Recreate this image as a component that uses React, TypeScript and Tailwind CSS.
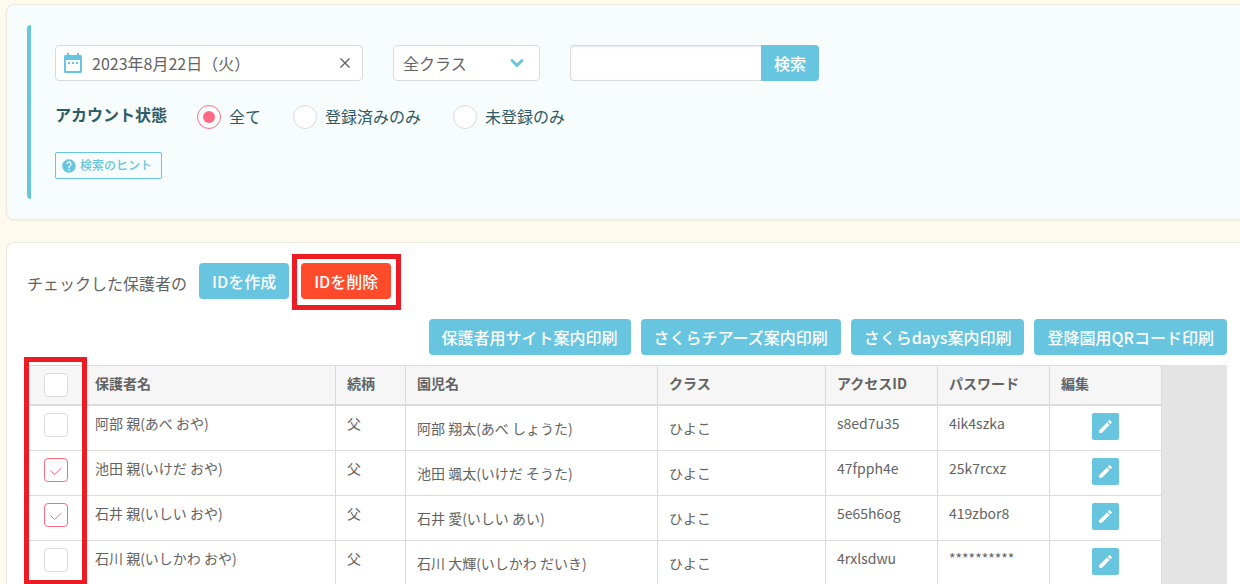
import { useState } from "react";
import { MdEdit, MdHelp } from "react-icons/md";

const statuses = [
  { id: "all", label: "全て" },
  { id: "registered", label: "登録済みのみ" },
  { id: "unregistered", label: "未登録のみ" },
];

const printButtons = [
  "保護者用サイト案内印刷",
  "さくらチアーズ案内印刷",
  "さくらdays案内印刷",
  "登降園用QRコード印刷",
];

const columns = [
  { name: "保護者名", width: "w-[252px]" },
  { name: "続柄", width: "w-[70px]" },
  { name: "園児名", width: "w-[252px]" },
  { name: "クラス", width: "w-[168px]" },
  { name: "アクセスID", width: "w-[112px]" },
  { name: "パスワード", width: "w-[112px]" },
  { name: "編集", width: "w-[112px]" },
];

const guardians = [
  { name: "阿部 親(あべ おや)", relation: "父", child: "阿部 翔太(あべ しょうた)", group: "ひよこ", accessId: "s8ed7u35", password: "4ik4szka" },
  { name: "池田 親(いけだ おや)", relation: "父", child: "池田 颯太(いけだ そうた)", group: "ひよこ", accessId: "47fpph4e", password: "25k7rcxz" },
  { name: "石井 親(いしい おや)", relation: "父", child: "石井 愛(いしい あい)", group: "ひよこ", accessId: "5e65h6og", password: "419zbor8" },
  { name: "石川 親(いしかわ おや)", relation: "父", child: "石川 大輝(いしかわ だいき)", group: "ひよこ", accessId: "4rxlsdwu", password: "**********" },
];

const button = "h-9 shrink-0 rounded bg-[#67c5df] px-[13px] text-base font-medium whitespace-nowrap text-white";
const cell = "border-r border-b border-[#dbdbdb] px-[11px] align-top";

function CalendarIcon() {
  return (
    <svg viewBox="0 0 18 20" className="h-5 w-[18px] shrink-0" fill="#67c5df" aria-hidden="true">
      <path
        fillRule="evenodd"
        d="M3 0h2v2h8V0h2v2h1.5A1.5 1.5 0 0 1 18 3.5v15a1.5 1.5 0 0 1-1.5 1.5h-15A1.5 1.5 0 0 1 0 18.5v-15A1.5 1.5 0 0 1 1.5 2H3zM2 7v11h14V7z"
      />
      <path d="M4 9h2v2H4zM8 9h2v2H8zM12 9h2v2h-2z" />
    </svg>
  );
}

function CheckBox({ label, checked, onChange }: { label: string; checked: boolean; onChange: () => void }) {
  return (
    <label className="mx-auto mt-[7px] grid size-6">
      <input
        type="checkbox"
        aria-label={label}
        checked={checked}
        onChange={onChange}
        className="col-start-1 row-start-1 size-6 appearance-none rounded border border-[#dbdbdb] bg-white checked:border-[#ff6b86]"
      />
      {checked && (
        <svg viewBox="0 0 24 24" className="pointer-events-none col-start-1 row-start-1 size-6" fill="none" stroke="#ff6b86" aria-hidden="true">
          <path d="M6.5 12.5l4 4 7-6.5" />
        </svg>
      )}
    </label>
  );
}

export default function App() {
  const [date, setDate] = useState("2023年8月22日（火）");
  const [status, setStatus] = useState("all");
  const [selected, setSelected] = useState([1, 2]);

  const toggle = (index: number) =>
    setSelected(selected.includes(index) ? selected.filter((i) => i !== index) : [...selected, index]);

  const toggleAll = () => setSelected(selected.length === guardians.length ? [] : guardians.map((_, i) => i));

  return (
    <main className="flex h-screen flex-col gap-[22px] overflow-hidden bg-[#fffaee] pt-1 pl-1.5 font-['Noto_Sans_CJK_JP',sans-serif] text-[#636363]">
      {/* Search conditions */}
      <section className="shrink-0 rounded-l-lg border border-r-0 border-[#ece9df] bg-[#f7fdfd] p-5 shadow-xs">
        <form className="rounded-l border-l-4 border-[#67c5df] py-5 pl-6" onSubmit={(e) => e.preventDefault()}>
          <div className="flex gap-[30px]">
            <div className="flex h-9 w-[308px] items-center gap-2.5 rounded border border-[#dbdbdb] bg-white px-2">
              <CalendarIcon />
              <input
                aria-label="日付"
                value={date}
                onChange={(e) => setDate(e.target.value)}
                className="min-w-0 flex-1 bg-transparent text-base outline-none"
              />
              <button type="button" aria-label="クリア" onClick={() => setDate("")}>
                <svg viewBox="0 0 18 18" className="size-[18px]" fill="none" stroke="#636363" strokeWidth="1.4" aria-hidden="true">
                  <path d="M4.5 4.500l9 9M13.500 4.500l-9 9" />
                </svg>
              </button>
            </div>
            <div className="relative w-[147px]">
              <select aria-label="クラス" className="h-9 w-full appearance-none rounded border border-[#dbdbdb] bg-white px-[9px] text-base">
                <option>全クラス</option>
              </select>
              <svg viewBox="0 0 14 10" className="pointer-events-none absolute top-[13px] right-4 h-2.5 w-3.5" fill="none" stroke="#67c5df" strokeWidth="2.8" strokeLinecap="round" aria-hidden="true">
                <path d="M2 2.500l5 5 5-5" />
              </svg>
            </div>
            <div className="flex">
              <input
                aria-label="キーワード"
                className="h-9 w-[191px] rounded-l border border-r-0 border-[#dbdbdb] bg-white px-2.5 text-base shadow-[inset_0_1px_2px_rgba(10,10,10,0.1)] outline-none"
              />
              <button type="submit" className="h-9 rounded-r bg-[#67c5df] px-[13px] text-base font-medium text-white">
                検索
              </button>
            </div>
          </div>

          <fieldset className="mt-6 flex gap-[30px] text-[#2f5b66]">
            <legend className="float-left text-base leading-[18px] font-bold">アカウント状態</legend>
            <div className="flex gap-8">
              {statuses.map((item) => (
                <label key={item.id} className="flex h-6 items-center gap-2 text-base">
                  <input
                    type="radio"
                    name="status"
                    checked={status === item.id}
                    onChange={() => setStatus(item.id)}
                    className="grid size-6 appearance-none place-content-center rounded-full border border-[#dbdbdb] bg-white checked:border-[#ff6b86] checked:before:size-3 checked:before:rounded-full checked:before:bg-[#ff6b86]"
                  />
                  <span className="pb-0.5">{item.label}</span>
                </label>
              ))}
            </div>
          </fieldset>

          <button type="button" className="mt-[23px] flex h-[27px] items-center gap-[3px] rounded-xs border border-[#67c5df] pr-[9px] pl-[5px] text-xs font-medium text-[#67c5df]">
            <MdHelp className="size-4" />
            <span className="pb-0.5">検索のヒント</span>
          </button>
        </form>
      </section>

      {/* Guardian list */}
      <section className="flex-1 rounded-tl-lg border-t border-l border-[#ece9df] bg-white pt-5 pr-[13px] pl-5">
        <div className="flex items-center gap-3">
          <span className="pt-1 text-base">チェックした保護者の</span>
          <button type="button" className={button}>
            IDを作成
          </button>
          <div className="relative">
            <button type="button" className="h-9 rounded bg-[#ff4a2b] px-[13px] text-base font-medium text-white">
              IDを削除
            </button>
            <div className="pointer-events-none absolute -top-[9px] -right-2.5 -bottom-[11px] -left-[9px] border-[5px] border-[#ed1c24]" />
          </div>
        </div>

        <div className="mt-5 flex justify-end gap-2.5">
          {printButtons.map((label) => (
            <button key={label} type="button" className={button}>
              {label}
            </button>
          ))}
        </div>

        <div className="relative mt-2.5 bg-[#e4e4e4]">
          <table className="w-[1135px] table-fixed border-separate border-spacing-0 bg-white text-sm leading-5">
            <thead>
              <tr className="h-[41px] bg-[#f6f6f6]">
                <th className="w-[57px] border border-b-2 border-[#dbdbdb] align-top">
                  <CheckBox label="すべて選択" checked={selected.length === guardians.length} onChange={toggleAll} />
                </th>
                {columns.map((column) => (
                  <th key={column.name} className={`${column.width} border-t border-r border-b-2 border-[#dbdbdb] px-[11px] pt-[7px] text-left align-top font-bold`}>
                    {column.name}
                  </th>
                ))}
              </tr>
            </thead>
            <tbody>
              {guardians.map((guardian, index) => (
                <tr key={guardian.name} className="h-[45px]">
                  <td className="border-x border-b border-[#dbdbdb] align-top">
                    <CheckBox label={guardian.name} checked={selected.includes(index)} onChange={() => toggle(index)} />
                  </td>
                  <td className={`${cell} pt-[7px]`}>{guardian.name}</td>
                  <td className={`${cell} pt-[7px]`}>{guardian.relation}</td>
                  <td className={`${cell} pt-3`}>{guardian.child}</td>
                  <td className={`${cell} pt-3`}>{guardian.group}</td>
                  <td className={`${cell} pt-[7px]`}>{guardian.accessId}</td>
                  <td className={`${cell} pt-[7px]`}>{guardian.password}</td>
                  <td className={`${cell} pt-[7px]`}>
                    <button type="button" aria-label="編集" className="mx-auto flex size-[27px] items-center justify-center rounded-xs bg-[#67c5df] text-white">
                      <MdEdit className="size-[17px]" />
                    </button>
                  </td>
                </tr>
              ))}
            </tbody>
          </table>
          <div className="pointer-events-none absolute -top-2 bottom-px -left-[3px] w-[63px] border-[5px] border-[#ed1c24]" />
        </div>
      </section>
    </main>
  );
}
